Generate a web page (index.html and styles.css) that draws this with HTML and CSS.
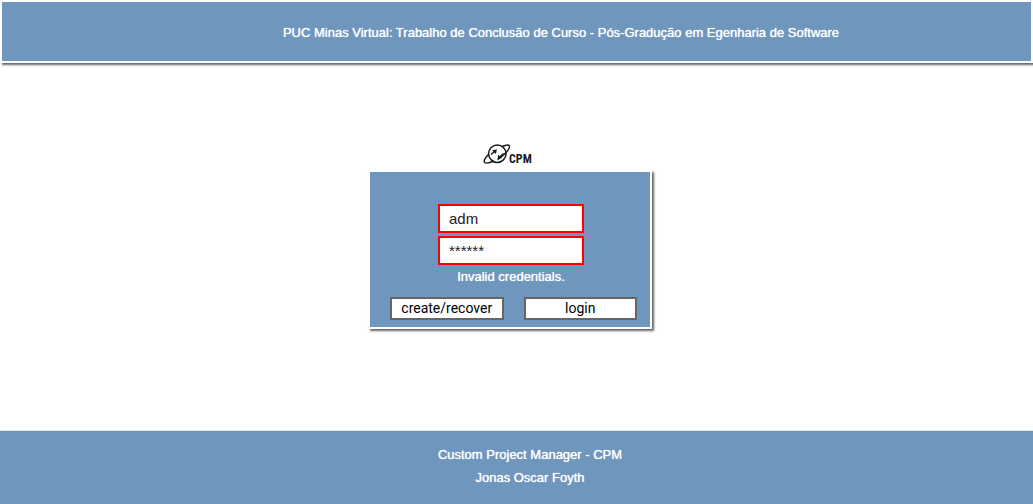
FILE: index.html
```html
<!DOCTYPE html>
<html lang="pt-BR">
<head>
<meta charset="utf-8">
<meta name="viewport" content="width=device-width, initial-scale=1">
<title>CPM</title>
<link rel="stylesheet" href="styles.css">
</head>
<body>
<header class="site-header">
  <h1 class="site-title">PUC Minas Virtual: Trabalho de Conclusão de Curso - Pós-Gradução em Egenharia de Software</h1>
</header>
<main class="content">
  <svg class="logo" viewBox="0 0 50 22" role="img" aria-label="CPM">
    <g fill="none" stroke="#1a1a1a" stroke-width="1.5">
      <circle cx="14.300" cy="10.700" r="8.700"/>
      <path d="M5.500 11.500C2 15 .5 18 1.700 19.500C3 20.700 7 19.800 11 18.300"/>
      <path d="M19 3.500C22.500 2 25.500 1.700 26.200 2.600C27.300 4 25 7.500 21.500 11C19 13.500 16.500 15.500 14.500 16.500"/>
      <path d="M8 11.500l3.500-3M20.500 10.500l-3.500 3"/>
    </g>
    <path fill="#1a1a1a" d="M9 7.200l5-.7-1.200 4.500zM15 11.700l-.2 4 4.200-.7z"/>
    <text class="logo-text" x="26" y="20">CPM</text>
  </svg>
  <form class="login" onsubmit="return false">
    <div class="fields">
      <input class="field" type="text" aria-label="User" value="adm">
      <input class="field" type="text" aria-label="Password" value="******">
    </div>
    <p class="message" role="alert">Invalid credentials.</p>
    <div class="actions">
      <button class="button" type="button">create/recover</button>
      <button class="button" type="submit">login</button>
    </div>
  </form>
</main>
<footer class="site-footer">
  <p class="footer-line">Custom Project Manager - CPM</p>
  <p class="footer-line">Jonas Oscar Foyth</p>
</footer>
</body>
</html>
```
FILE: styles.css
```css
* { box-sizing: border-box; }
body {
  margin: 0;
  min-height: 100vh;
  display: flex;
  flex-direction: column;
  background: #fff;
  color: #fff;
  font: 400 13px/23px "Liberation Sans", Arial, sans-serif;
}
.site-header {
  padding: 19px 0 17px 89px;
  border: 2px solid #fff;
  background: #6f96bd;
  box-shadow: 2px 2px 2px #666;
  text-align: center;
}
.site-title, .message, .footer-line { margin: 0; font: inherit; text-shadow: 0 0 1px #fff; }
.content {
  flex: 1;
  display: flex;
  flex-direction: column;
  align-items: center;
  padding: 80px 13px 0 0;
}
.logo { width: 50px; height: 22px; margin: 0 5px 5px 0; }
.logo-text { font: 700 12px "Roboto Condensed", Roboto, sans-serif; fill: #1a1a1a; }
.login {
  width: 284px;
  padding: 32px 13px 7px 20px;
  border: 2px solid #fff;
  background: #6f96bd;
  box-shadow: 2px 2px 2px #666;
}
.fields {
  display: flex;
  flex-direction: column;
  align-items: center;
  gap: 3px;
  padding-right: 5px;
}
.field {
  width: 146px;
  height: 29px;
  padding: 0 9px;
  border: 2px solid #f00;
  background: #fff;
  color: #222;
  font: 400 15px "Liberation Sans", Arial, sans-serif;
}
.message { margin: 0 5px 9px 0; text-align: center; }
.actions { display: grid; grid-template-columns: 1fr 1fr; gap: 20px; }
.button {
  height: 23px;
  padding: 0 0 2px;
  border: 2px solid #666;
  background: #fff;
  color: #000;
  font: 400 14px Roboto, sans-serif;
}
.site-footer {
  padding: 12px 0 15px 27px;
  border-top: 1px solid #dde6ee;
  background: #6f96bd;
  text-align: center;
}
```
